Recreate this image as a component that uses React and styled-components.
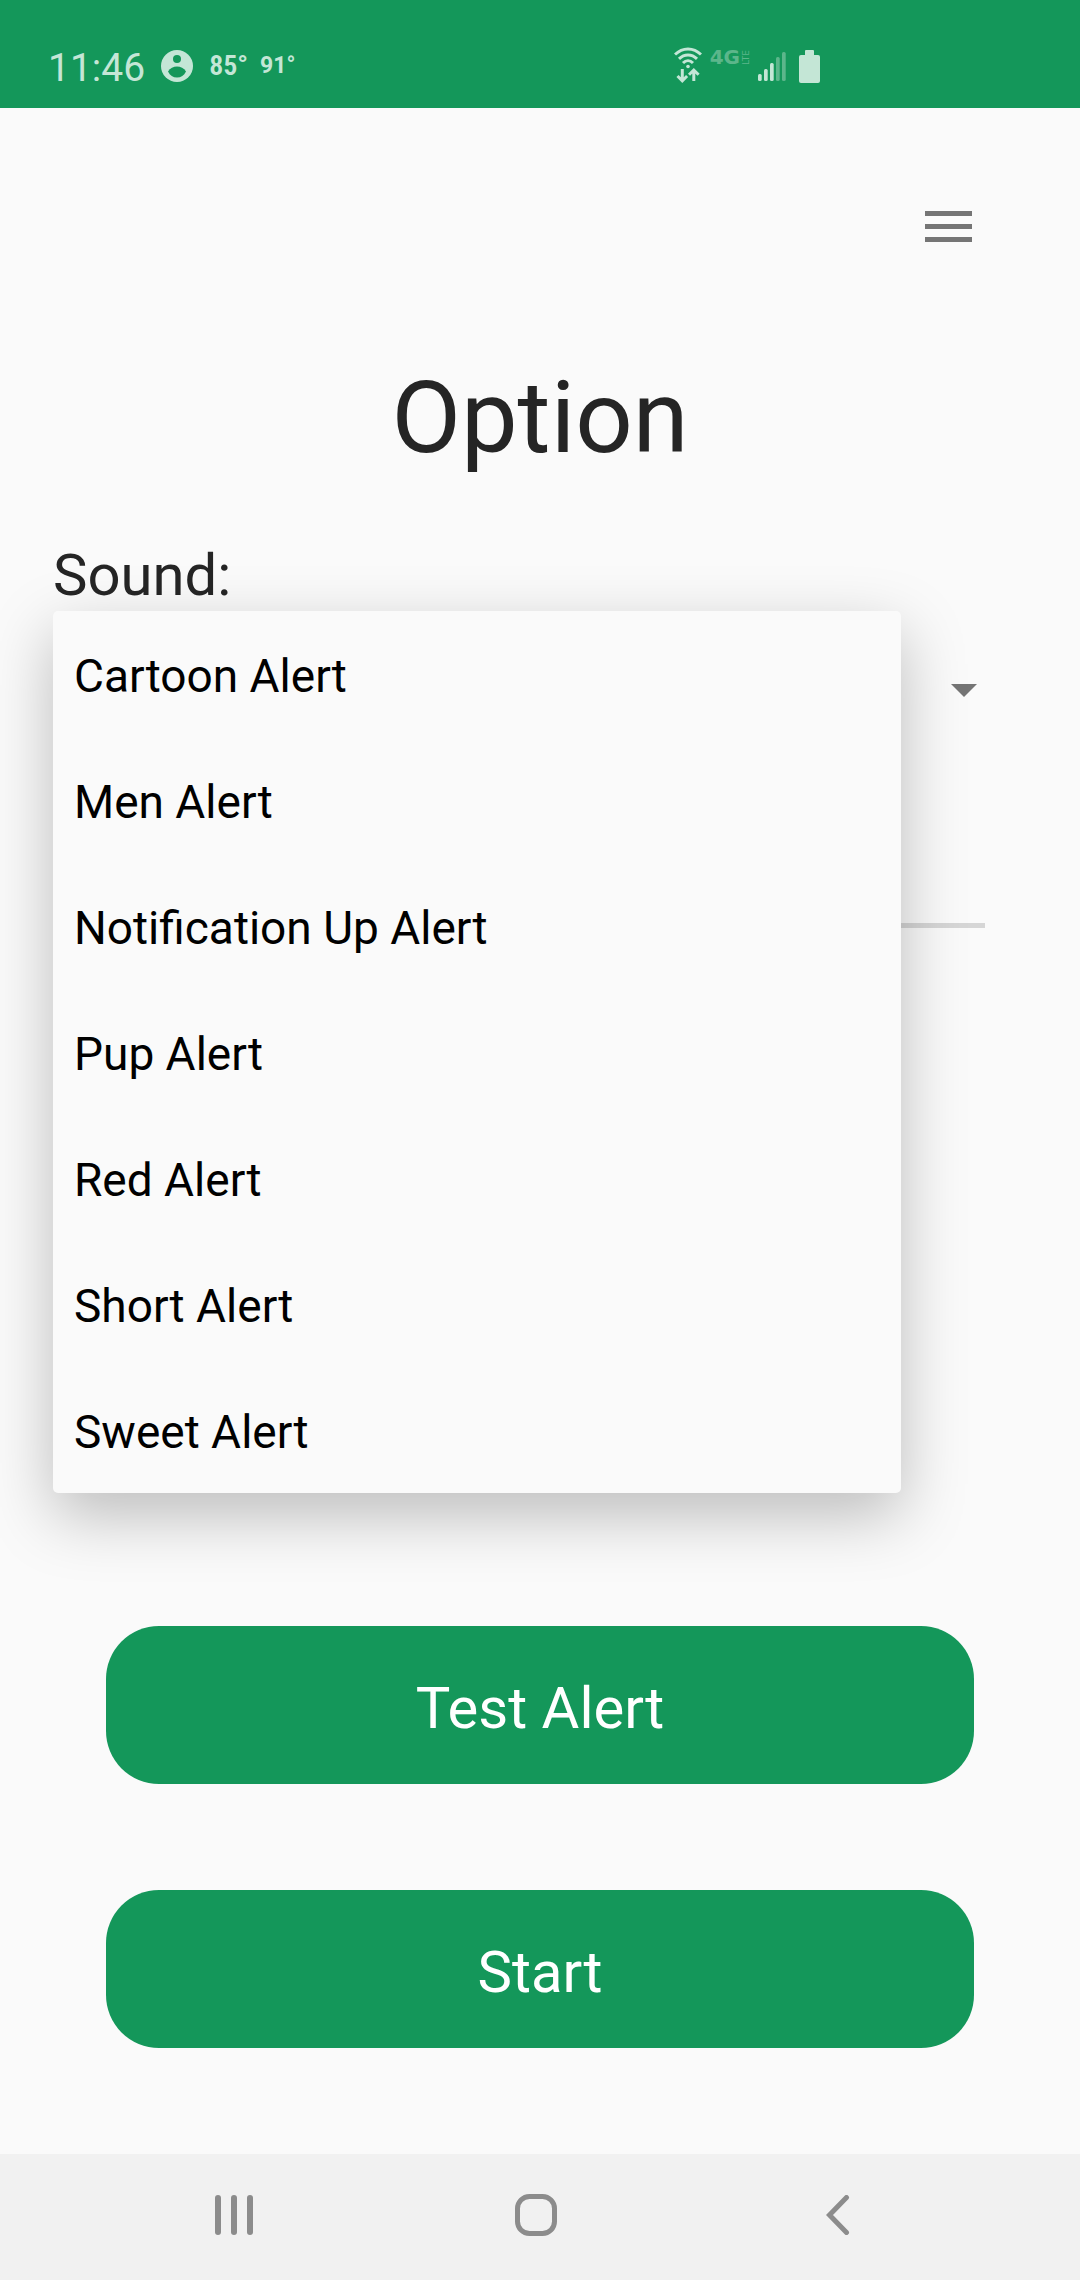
import React, { useState } from "react";
import styled, { createGlobalStyle } from "styled-components";

const GREEN = "#14975a";
const PAPER = "#fafafa";
const STATUS_INK = "#c4e6d6";
const STATUS_DIM = "#5cb68b";

const GlobalStyle = createGlobalStyle`
  *, *::before, *::after { box-sizing: border-box; }
  body {
    margin: 0;
    background: ${PAPER};
    color: #252525;
    font-family: Roboto, "Noto Sans", sans-serif;
  }
  button, select, input { font: inherit; }
`;

const Screen = styled.div`
  display: flex;
  flex-direction: column;
  min-height: 100vh;
  overflow: hidden;
`;

const StatusBar = styled.header`
  display: flex;
  justify-content: space-between;
  align-items: center;
  height: 108px;
  padding: 24px 260px 0 48px;
  background: ${GREEN};
  color: ${STATUS_INK};
`;

const StatusGroup = styled.div`
  display: flex;
  align-items: center;
  gap: ${({ $gap }) => $gap}px;
`;

const Clock = styled.time`
  padding-top: 4px;
  font-size: 39px;
  line-height: 46px;
`;

const Temperature = styled.span`
  font-family: ${({ $condensed }) => ($condensed ? '"Roboto Condensed", ' : "")}Roboto, sans-serif;
  font-size: ${({ $size }) => $size}px;
  font-weight: ${({ $condensed }) => ($condensed ? 600 : 700)};
  line-height: 36px;
`;

const Network = styled.span`
  display: flex;
  align-items: center;
  align-self: flex-start;
  gap: 2px;
  height: 20px;
  color: ${STATUS_DIM};
  font-family: "DejaVu Sans", sans-serif;
  font-size: 20px;
  font-weight: 700;
  line-height: 20px;
`;

const NetworkKind = styled.span`
  writing-mode: vertical-rl;
  transform: rotate(180deg);
  font-size: 9px;
  font-weight: 400;
  line-height: 8px;
`;

const Main = styled.main`
  flex: 1;
  display: flex;
  flex-direction: column;
`;

const Toolbar = styled.div`
  display: flex;
  justify-content: flex-end;
  padding: 82px 96px 0;
`;

const IconButton = styled.button`
  display: grid;
  place-items: center;
  width: 71px;
  height: 72px;
  padding: 0;
  border: 0;
  background: none;
  color: #757575;
`;

const Title = styled.h1`
  margin: 96px 0 0;
  font-size: 101px;
  font-weight: 400;
  line-height: 120px;
  text-align: center;
`;

const Form = styled.div`
  display: flex;
  flex-direction: column;
  padding: 63px 53px 0;
`;

const FieldLabel = styled.label`
  font-size: 58px;
  line-height: 68px;
  margin-bottom: 2px;
`;

const Dropdown = styled.div`
  position: relative;
  display: grid;
  align-items: center;
  color: #757575;
`;

const SoundSelect = styled.select`
  grid-area: 1 / 1;
  width: 100%;
  height: 158px;
  padding: 0 126px 0 21px;
  border: 0;
  background: transparent;
  color: #000;
  font-size: 46px;
  appearance: none;
`;

const Arrow = styled.svg`
  grid-area: 1 / 1;
  justify-self: end;
  margin-right: 50px;
  pointer-events: none;
`;

const Menu = styled.ul`
  position: absolute;
  z-index: 1;
  top: 0;
  left: 0;
  right: 126px;
  margin: 0;
  padding: 0;
  list-style: none;
  border-radius: 5px;
  background: ${PAPER};
  box-shadow: 0 22px 64px rgba(0, 0, 0, 0.25);
`;

const MenuItem = styled.button`
  display: block;
  width: 100%;
  height: 126px;
  padding: 4px 21px 0;
  border: 0;
  background: none;
  color: #000;
  font-size: 46px;
  text-align: left;
`;

const Slider = styled.input`
  appearance: none;
  height: 104px;
  margin: 104px 42px 0;
  background: transparent;

  &::-webkit-slider-runnable-track {
    height: 5px;
    background: #d6d6d6;
  }
  &::-webkit-slider-thumb {
    appearance: none;
    width: 32px;
    height: 32px;
    margin-top: -14px;
    border-radius: 50%;
    background: ${GREEN};
  }
`;

const Actions = styled.div`
  display: flex;
  flex-direction: column;
  gap: 106px;
  margin-top: auto;
  padding: 106px;
`;

const ActionButton = styled.button`
  height: 158px;
  padding: 6px 0 0;
  border: 0;
  border-radius: 53px;
  background: ${GREEN};
  color: #fff;
  font-size: 58px;
`;

const NavBar = styled.nav`
  display: grid;
  grid-template-columns: repeat(3, 1fr);
  height: 126px;
  padding: 0 91px 0 83px;
  background: #f1f1f1;
`;

const NavButton = styled.button`
  display: grid;
  place-items: center;
  padding: 0 0 4px;
  border: 0;
  background: none;
  color: #8c8c8c;
`;

const SOUNDS = [
  "Cartoon Alert",
  "Men Alert",
  "Notification Up Alert",
  "Pup Alert",
  "Red Alert",
  "Short Alert",
  "Sweet Alert",
];

const SIGNAL = [
  { x: 0, h: 7 },
  { x: 6, h: 12 },
  { x: 12, h: 18 },
  { x: 18, h: 24, dim: true },
  { x: 24, h: 29, dim: true },
];

function AccountIcon() {
  return (
    <svg width="32" height="32" viewBox="0 0 32 32" aria-hidden="true">
      <circle cx="16" cy="16" r="16" fill={STATUS_INK} />
      <circle cx="16" cy="9" r="4" fill={GREEN} />
      <path d="M7 21.500C9 18 12.500 16.500 16 16.500s7 1.500 9 5C23 25.500 20 27.500 16 27.500s-7-2-9-6z" fill={GREEN} />
    </svg>
  );
}

function WifiIcon() {
  return (
    <svg width="28" height="38" viewBox="0 0 28 38" fill="none" stroke={STATUS_INK} strokeWidth="3" aria-hidden="true">
      <path d="M1 7.500C8.500 0 19.500 0 27 7.500" />
      <path d="M5 11.800c5.400-5.200 12.600-5.200 18 0" />
      <path d="M9 16c3-3 7-3 10 0" />
      <circle cx="14" cy="19.500" r="1.800" fill={STATUS_INK} stroke="none" />
      <path d="M8.300 22v11M3.500 29l4.800 4.800 4.800-4.800" />
      <path d="M19.800 34V24M15 27.800l4.800-4.800 4.800 4.800" />
    </svg>
  );
}

function SignalIcon() {
  return (
    <svg width="33" height="30" viewBox="0 0 33 30" aria-hidden="true">
      {SIGNAL.map(({ x, h, dim }) => (
        <rect key={x} x={x} y={30 - h} width="3.700" height={h} rx="1.500" fill={dim ? STATUS_DIM : STATUS_INK} />
      ))}
    </svg>
  );
}

function BatteryIcon() {
  return (
    <svg width="21" height="33" viewBox="0 0 21 33" fill={STATUS_INK} aria-hidden="true">
      <rect y="5" width="21" height="28" rx="2" />
      <rect x="6" width="9" height="8" rx="1" />
    </svg>
  );
}

export default function App() {
  const [open, setOpen] = useState(true);
  const [sound, setSound] = useState(SOUNDS[0]);

  const choose = (name) => {
    setSound(name);
    setOpen(false);
  };

  const openMenu = (event) => {
    event.preventDefault();
    setOpen(true);
  };

  return (
    <Screen>
      <GlobalStyle />
      <StatusBar>
        <StatusGroup $gap={16}>
          <Clock>11:46</Clock>
          <AccountIcon />
          <StatusGroup $gap={12}>
            <Temperature $size={28} $condensed>85°</Temperature>
            <Temperature $size={23}>91°</Temperature>
          </StatusGroup>
        </StatusGroup>
        <StatusGroup $gap={8}>
          <WifiIcon />
          <Network>
            4G<NetworkKind>LTE</NetworkKind>
          </Network>
          <SignalIcon />
          <BatteryIcon />
        </StatusGroup>
      </StatusBar>

      <Main>
        <Toolbar>
          <IconButton type="button" aria-label="Menu">
            <svg width="47" height="31" viewBox="0 0 47 31" fill="currentColor" aria-hidden="true">
              <rect width="47" height="5" />
              <rect y="13" width="47" height="5" />
              <rect y="26" width="47" height="5" />
            </svg>
          </IconButton>
        </Toolbar>
        <Title>Option</Title>

        <Form>
          <FieldLabel htmlFor="sound">Sound:</FieldLabel>
          <Dropdown>
            <SoundSelect
              id="sound"
              value={sound}
              onMouseDown={openMenu}
              onChange={(event) => setSound(event.target.value)}
            >
              {SOUNDS.map((name) => (
                <option key={name}>{name}</option>
              ))}
            </SoundSelect>
            <Arrow width="26" height="13" viewBox="0 0 26 13" fill="currentColor" aria-hidden="true">
              <path d="M0 0h26L13 13z" />
            </Arrow>
            {open && (
              <Menu>
                {SOUNDS.map((name) => (
                  <li key={name}>
                    <MenuItem type="button" onClick={() => choose(name)}>
                      {name}
                    </MenuItem>
                  </li>
                ))}
              </Menu>
            )}
          </Dropdown>
          <Slider type="range" min="0" max="100" defaultValue="0" aria-label="Volume" />
        </Form>

        <Actions>
          <ActionButton type="button">Test Alert</ActionButton>
          <ActionButton type="button">Start</ActionButton>
        </Actions>
      </Main>

      <NavBar>
        <NavButton type="button" aria-label="Recent apps">
          <svg width="39" height="40" viewBox="0 0 39 40" fill="currentColor" aria-hidden="true">
            <rect width="6" height="40" rx="3" />
            <rect x="16" width="6" height="40" rx="3" />
            <rect x="32" width="6" height="40" rx="3" />
          </svg>
        </NavButton>
        <NavButton type="button" aria-label="Home">
          <svg width="42" height="42" viewBox="0 0 42 42" fill="none" stroke="currentColor" strokeWidth="5" aria-hidden="true">
            <rect x="2.500" y="2.500" width="37" height="37" rx="12" />
          </svg>
        </NavButton>
        <NavButton type="button" aria-label="Back">
          <svg width="24" height="40" viewBox="0 0 24 40" fill="none" stroke="currentColor" strokeWidth="5" strokeLinecap="round" aria-hidden="true">
            <path d="M20.500 2.500L3.500 20l17 17.500" />
          </svg>
        </NavButton>
      </NavBar>
    </Screen>
  );
}
